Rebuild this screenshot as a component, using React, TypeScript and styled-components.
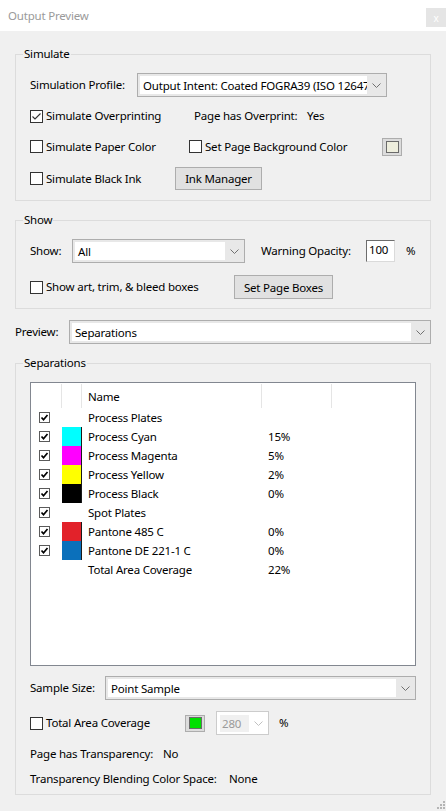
import styled, { createGlobalStyle } from "styled-components";

const GlobalStyle = createGlobalStyle`
  html, body {
    margin: 0;
    padding: 0;
    background: #f0f0f0;
  }
  body {
    font-family: "Segoe UI", "Noto Sans", sans-serif;
    font-size: 11.5px;
    letter-spacing: -0.2px;
    color: #000;
  }
`;

const Window = styled.div`
  width: 446px;
  height: 811px;
  display: flex;
  flex-direction: column;
  overflow: hidden;
  background: #f0f0f0;
`;

const TitleBar = styled.div`
  height: 31px;
  flex-shrink: 0;
  background: #fff;
  display: flex;
  justify-content: space-between;
  align-items: center;
  padding-left: 8px;
  box-sizing: border-box;
`;

const Title = styled.div`
  color: #9a9a9a;
  font-size: 11.5px;
`;

const CloseButton = styled.div`
  align-self: flex-start;
  margin-top: 8px;
  width: 20px;
  height: 19px;
  background: #e5e5e5;
  color: #fff;
  font-size: 10px;
  display: flex;
  align-items: center;
  justify-content: center;
`;

const Content = styled.div`
  padding: 15px 15px 0 15px;
  display: flex;
  flex-direction: column;
`;

const Group = styled.fieldset<{ $mt?: number; $pb: number }>`
  margin: ${(p) => p.$mt ?? 0}px 0 0 0;
  border: 1px solid #dcdcdc;
  padding: 11px 14px ${(p) => p.$pb}px 14px;
  min-width: 0;
  display: flex;
  flex-direction: column;
`;

const Legend = styled.legend`
  padding: 0 1px;
  margin-left: -7px;
  line-height: 16px;
`;

const Row = styled.div<{ $h: number; $mt?: number }>`
  display: flex;
  align-items: center;
  height: ${(p) => p.$h}px;
  margin-top: ${(p) => p.$mt ?? 0}px;
  white-space: nowrap;
`;

const Text = styled.span<{ $w?: number }>`
  ${(p) => (p.$w ? `width: ${p.$w}px;` : "")}
  flex-shrink: 0;
  line-height: 16px;
`;

const CheckField = styled.label<{ $w: number }>`
  display: flex;
  align-items: center;
  gap: 3px;
  width: ${(p) => p.$w}px;
  flex-shrink: 0;
  line-height: 16px;
`;

const Box = styled.span`
  width: 13px;
  height: 13px;
  box-sizing: border-box;
  border: 1px solid #333;
  background: #fff;
  display: inline-flex;
  align-items: center;
  justify-content: center;
  flex-shrink: 0;
`;

const CheckBox = ({ checked }: { checked?: boolean }) => (
  <Box>
    {checked && (
      <svg width="11" height="11" viewBox="0 0 11 11">
        <polyline points="1.5,5.5 4,8 9.5,2.5" fill="none" stroke="#333" strokeWidth="1.1" />
      </svg>
    )}
  </Box>
);

const SelectBox = styled.div<{ $w?: number; $disabled?: boolean }>`
  display: flex;
  height: 24px;
  box-sizing: border-box;
  ${(p) => (p.$w ? `width: ${p.$w}px; flex-shrink: 0;` : "flex: 1;")}
  border: 1px solid ${(p) => (p.$disabled ? "#cccccc" : "#adadad")};
  background: ${(p) => (p.$disabled ? "#fff" : "#e8e8e8")};
  padding: 2px 0 2px 2px;
`;

const SelectValue = styled.div<{ $disabled?: boolean }>`
  flex: 1;
  min-width: 0;
  overflow: hidden;
  background: #fff;
  display: flex;
  align-items: center;
  padding-left: 3px;
  color: ${(p) => (p.$disabled ? "#9a9a9a" : "#000")};
  white-space: nowrap;
`;

const DisabledValue = styled.span`
  background: #f0f0f0;
  padding: 1px 2px;
  margin-left: -2px;
  width: 28px;
`;

const SelectArrow = styled.div`
  width: 19px;
  flex-shrink: 0;
  display: flex;
  align-items: center;
  justify-content: center;
`;

const Chevron = ({ color = "#707070" }: { color?: string }) => (
  <svg width="9" height="5" viewBox="0 0 9 5">
    <polyline points="0.5,0.5 4.5,4.5 8.5,0.5" fill="none" stroke={color} strokeWidth="1" />
  </svg>
);

const Select = ({
  value,
  w,
  disabled,
}: {
  value: string;
  w?: number;
  disabled?: boolean;
}) => (
  <SelectBox $w={w} $disabled={disabled}>
    <SelectValue $disabled={disabled}>
      {disabled ? <DisabledValue>{value}</DisabledValue> : value}
    </SelectValue>
    <SelectArrow>
      <Chevron color={disabled ? "#c0c0c0" : "#707070"} />
    </SelectArrow>
  </SelectBox>
);

const Button = styled.button<{ $w: number }>`
  width: ${(p) => p.$w}px;
  height: 100%;
  flex-shrink: 0;
  border: 1px solid #adadad;
  background: #e1e1e1;
  font-family: inherit;
  font-size: inherit;
  letter-spacing: inherit;
  color: #000;
  padding: 0;
`;

const NumberField = styled.div`
  width: 29px;
  height: 22px;
  box-sizing: border-box;
  flex-shrink: 0;
  background: #fff;
  border-top: 1px solid #6d6d6d;
  border-left: 1px solid #6d6d6d;
  border-right: 1px solid #dadada;
  border-bottom: 1px solid #dadada;
  padding-left: 2px;
  line-height: 18px;
`;

const SwatchButton = styled.div<{ $h: number }>`
  width: 20px;
  height: ${(p) => p.$h}px;
  box-sizing: border-box;
  flex-shrink: 0;
  border: 1px solid #adadad;
  background: #dcdcdc;
  display: flex;
  align-items: center;
  justify-content: center;
`;

const SwatchInner = styled.div<{ $color: string }>`
  width: 13px;
  height: 12px;
  box-sizing: border-box;
  border: 1px solid #6a6a6a;
  background: ${(p) => p.$color};
`;

const Spacer = styled.div<{ $w: number }>`
  width: ${(p) => p.$w}px;
  flex-shrink: 0;
`;

const ListBox = styled.div`
  height: 284px;
  box-sizing: border-box;
  border: 1px solid #828790;
  background: #fff;
  display: flex;
  flex-direction: column;
`;

const columns = "31px 20px 180px 70px 1fr";

const HeaderRow = styled.div`
  display: grid;
  grid-template-columns: ${columns};
  height: 25px;
  flex-shrink: 0;
`;

const HeaderCell = styled.div<{ $last?: boolean }>`
  margin: 1px 0 0 0;
  border-right: ${(p) => (p.$last ? "none" : "1px solid #e5e5e5")};
  display: flex;
  align-items: center;
  padding-left: 6px;
`;

const PlateRow = styled.div`
  display: grid;
  grid-template-columns: ${columns};
  height: 19px;
  align-items: center;
`;

const PlateCheck = styled.div`
  padding-left: 8px;
  display: flex;
  align-items: center;
  height: 100%;
`;

const PlateSwatch = styled.div<{ $color?: string }>`
  height: 19px;
  box-sizing: border-box;
  background: ${(p) => p.$color ?? "transparent"};
  border-right: ${(p) => (p.$color ? "1px solid #1a1a1a" : "none")};
`;

const PlateText = styled.div`
  padding-left: 6px;
  white-space: nowrap;
  line-height: 16px;
`;

const ListCheck = () => (
  <svg width="11" height="11" viewBox="0 0 11 11">
    <rect x="0.5" y="0.5" width="10" height="10" fill="#fff" stroke="#5a5a5a" />
    <polyline points="2.5,5.5 4.5,7.8 8.5,3" fill="none" stroke="#000" strokeWidth="1.7" />
  </svg>
);

const Footer = styled.div`
  flex: 1;
  display: flex;
  justify-content: flex-end;
  align-items: flex-end;
`;

const Grip = () => (
  <svg width="11" height="11" viewBox="0 0 11 11">
    {[
      [8, 1],
      [5, 4],
      [8, 4],
      [2, 7],
      [5, 7],
      [8, 7],
    ].map(([x, y]) => (
      <rect key={`${x}-${y}`} x={x} y={y} width="2" height="2" fill="#b5b5b5" />
    ))}
  </svg>
);

type Plate = {
  name: string;
  color?: string;
  pct?: string;
  checked?: boolean;
};

const plates: Plate[] = [
  { name: "Process Plates", checked: true },
  { name: "Process Cyan", color: "#00ffff", pct: "15%", checked: true },
  { name: "Process Magenta", color: "#ff00ff", pct: "5%", checked: true },
  { name: "Process Yellow", color: "#ffff00", pct: "2%", checked: true },
  { name: "Process Black", color: "#000000", pct: "0%", checked: true },
  { name: "Spot Plates", checked: true },
  { name: "Pantone 485 C", color: "#e2222a", pct: "0%", checked: true },
  { name: "Pantone DE 221-1 C", color: "#0b70bb", pct: "0%", checked: true },
  { name: "Total Area Coverage", pct: "22%" },
];

export default function App() {
  return (
    <>
      <GlobalStyle />
      <Window>
        <TitleBar>
          <Title>Output Preview</Title>
          <CloseButton>x</CloseButton>
        </TitleBar>
        <Content>
          <Group $pb={10}>
            <Legend>Simulate</Legend>
            <Row $h={24}>
              <Text $w={107}>Simulation Profile:</Text>
              <Select w={250} value="Output Intent: Coated FOGRA39 (ISO 12647-2:2004)" />
            </Row>
            <Row $h={20} $mt={9}>
              <CheckField $w={164}>
                <CheckBox checked />
                Simulate Overprinting
              </CheckField>
              <Text $w={113}>Page has Overprint:</Text>
              <Text>Yes</Text>
            </Row>
            <Row $h={21} $mt={10}>
              <CheckField $w={159}>
                <CheckBox />
                Simulate Paper Color
              </CheckField>
              <CheckField $w={193}>
                <CheckBox />
                Set Page Background Color
              </CheckField>
              <SwatchButton $h={18}>
                <SwatchInner $color="#eeeedd" />
              </SwatchButton>
            </Row>
            <Row $h={23} $mt={10}>
              <CheckField $w={145}>
                <CheckBox />
                Simulate Black Ink
              </CheckField>
              <Button $w={87}>Ink Manager</Button>
            </Row>
          </Group>

          <Group $mt={11} $pb={9}>
            <Legend>Show</Legend>
            <Row $h={24}>
              <Text $w={42}>Show:</Text>
              <Select w={173} value="All" />
              <Spacer $w={16} />
              <Text $w={105}>Warning Opacity:</Text>
              <NumberField>100</NumberField>
              <Spacer $w={11} />
              <Text>%</Text>
            </Row>
            <Row $h={24} $mt={12}>
              <CheckField $w={204}>
                <CheckBox />
                Show art, trim, &amp; bleed boxes
              </CheckField>
              <Button $w={99}>Set Page Boxes</Button>
            </Row>
          </Group>

          <Row $h={24} $mt={11}>
            <Text $w={54}>Preview:</Text>
            <Select value="Separations" />
          </Row>

          <Group $mt={11} $pb={7}>
            <Legend>Separations</Legend>
            <ListBox>
              <HeaderRow>
                <HeaderCell />
                <HeaderCell />
                <HeaderCell>Name</HeaderCell>
                <HeaderCell />
                <HeaderCell $last />
              </HeaderRow>
              {plates.map((p) => (
                <PlateRow key={p.name}>
                  <PlateCheck>{p.checked && <ListCheck />}</PlateCheck>
                  <PlateSwatch $color={p.color} />
                  <PlateText>{p.name}</PlateText>
                  <PlateText>{p.pct}</PlateText>
                  <div />
                </PlateRow>
              ))}
            </ListBox>
            <Row $h={24} $mt={10}>
              <Text $w={75}>Sample Size:</Text>
              <Select value="Point Sample" />
            </Row>
            <Row $h={24} $mt={11}>
              <CheckField $w={155}>
                <CheckBox />
                Total Area Coverage
              </CheckField>
              <SwatchButton $h={17}>
                <SwatchInner $color="#00e000" />
              </SwatchButton>
              <Spacer $w={11} />
              <Select w={53} value="280" disabled />
              <Spacer $w={10} />
              <Text>%</Text>
            </Row>
            <Row $h={16} $mt={11}>
              <Text $w={133}>Page has Transparency:</Text>
              <Text>No</Text>
            </Row>
            <Row $h={16} $mt={9}>
              <Text $w={199}>Transparency Blending Color Space:</Text>
              <Text>None</Text>
            </Row>
          </Group>
        </Content>
        <Footer>
          <Grip />
        </Footer>
      </Window>
    </>
  );
}
